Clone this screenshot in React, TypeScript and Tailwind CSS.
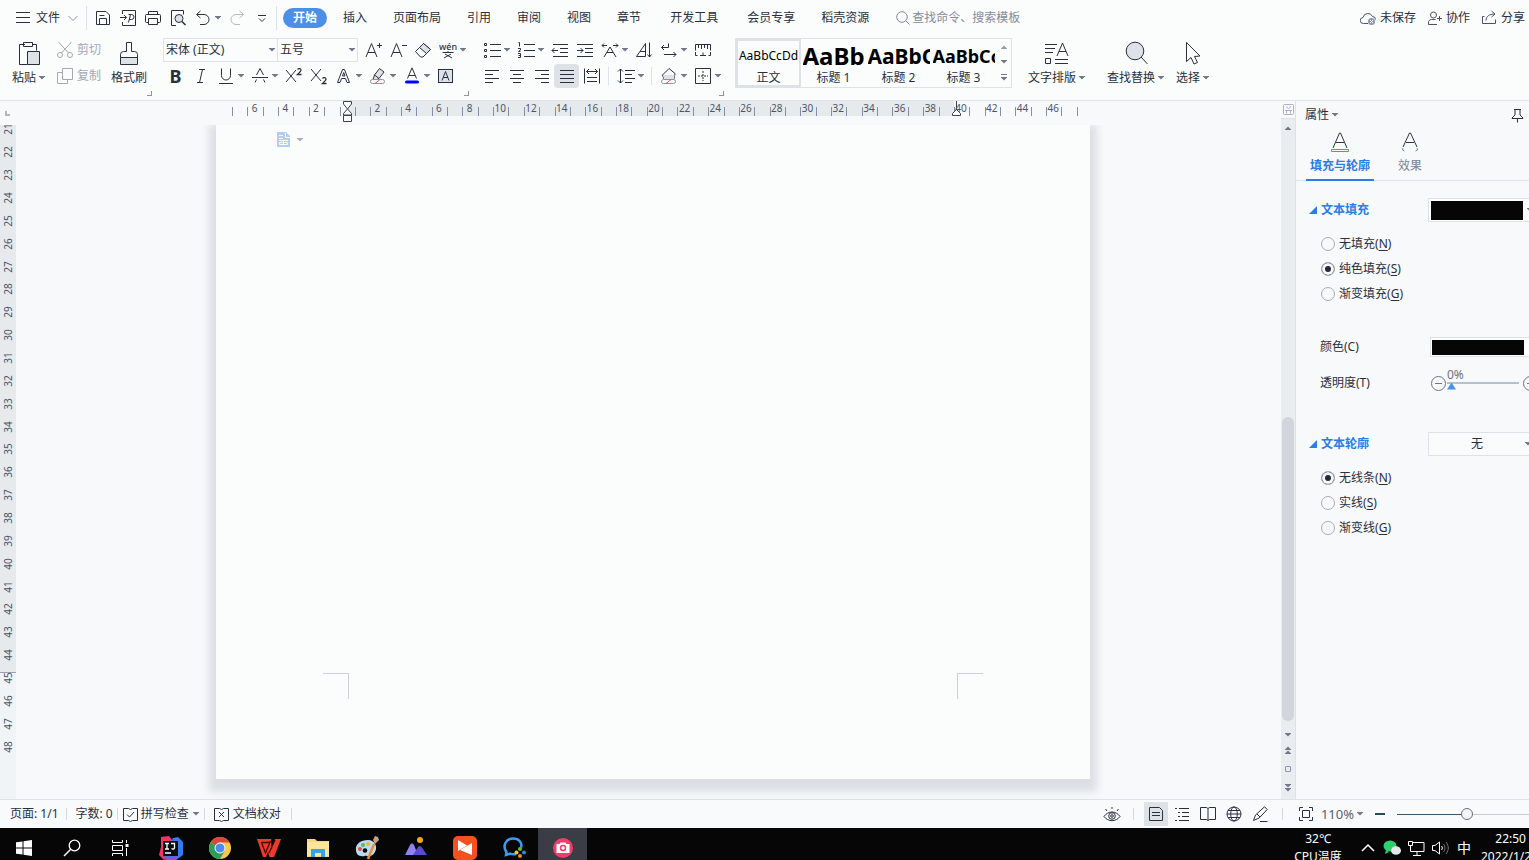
import { useState } from 'react'
import type { ReactNode } from 'react'

interface SvgProps {
  size?: number
  className?: string
  children: ReactNode
}

function Svg({ size = 18, className = '', children }: SvgProps) {
  return (
    <svg
      width={size}
      height={size}
      viewBox={`0 0 ${size} ${size}`}
      fill="none"
      stroke="currentColor"
      className={`shrink-0 ${className}`}
      aria-hidden="true"
    >
      {children}
    </svg>
  )
}

function Caret({ className = '' }: { className?: string }) {
  return (
    <svg width="6" height="4" viewBox="0 0 6 4" className={`shrink-0 fill-[#71788a] ${className}`} aria-hidden="true">
      <path d="M0 0h6v.5L3 3.500 0 .5z" />
    </svg>
  )
}

interface ToolProps {
  label: string
  caret?: boolean
  active?: boolean
  children: ReactNode
}

function Tool({ label, caret, active, children }: ToolProps) {
  return (
    <button aria-label={label} className={`flex h-6 items-center ${caret ? 'w-[34px]' : 'w-[25px]'} ${active ? 'rounded-sm bg-[#dde2e6]' : ''}`}>
      <span className="flex w-[25px] shrink-0 justify-center">{children}</span>
      {caret && <Caret />}
    </button>
  )
}

function ToolDivider() {
  return <span className="mx-1 h-[18px] w-px shrink-0 bg-[#dce2e6]" />
}

function GroupCorner({ label }: { label: string }) {
  return (
    <div className="flex justify-end pt-[2px]">
      <button aria-label={label} className="size-[5px] border-r border-b border-[#8d93a3]" />
    </div>
  )
}

const mainTabs = [['插入', '页面布局', '引用', '审阅', '视图', '章节'], ['开发工具'], ['会员专享', '稻壳资源']]

function TabBar() {
  return (
    <header className="flex h-[34px] shrink-0 items-center pt-px whitespace-nowrap">
      <button className="flex items-center gap-[6px] pl-4">
        <Svg size={14}>
          <path d="M0 1.500h14M0 6.500h14M0 11.500h14" />
        </Svg>
        文件
        <Svg size={10} className="ml-[2px] text-[#8f95a3]">
          <path d="M.5 3l4.500 4.500L9.500 3" />
        </Svg>
      </button>
      <span className="mr-[3px] ml-2 h-6 w-px bg-[#dce2e6]" />
      <Tool label="保存">
        <Svg size={16}>
          <path d="M1.500 1.500h9.500l3.500 3.500v9.500h-13zM4.500 14V8.500h7V14M4.500 5.500h5" />
        </Svg>
      </Tool>
      <Tool label="输出为PDF">
        <Svg size={16}>
          <path d="M2.500 4V.5h13v15h-13V12M0 7.500h6M4 5l2.500 2.500L4 10M8.500 12.500l2-8M8.500 4.500h3a2 2 0 0 1 0 5H9" />
        </Svg>
      </Tool>
      <Tool label="打印">
        <Svg size={16}>
          <path d="M3.500 4.500v-3h9v3M3.500 12.500h-2a1 1 0 0 1-1-1v-6a1 1 0 0 1 1-1h13a1 1 0 0 1 1 1v6a1 1 0 0 1-1 1h-2M3.500 8.500h9v6h-9z" />
        </Svg>
      </Tool>
      <Tool label="打印预览">
        <Svg size={16}>
          <path d="M6 15.500H1.500V.5h12v4" />
          <circle cx="9" cy="8.500" r="4" fill="#dde2e8" />
          <path d="M12 11.500l3.500 3.500" strokeWidth="1.500" />
        </Svg>
      </Tool>
      <Tool label="撤销" caret>
        <Svg size={16}>
          <path d="M5.500 1L1.500 4.500 5.500 8M2 4.500h7a5 5 0 0 1 0 10H5" />
        </Svg>
      </Tool>
      <Tool label="恢复">
        <Svg size={16} className="text-[#b5b9c3]">
          <path d="M10.500 1l4 3.500-4 3.500M14 4.500H7a5 5 0 0 0 0 10h4" />
        </Svg>
      </Tool>
      <Tool label="自定义快速访问">
        <Svg size={10}>
          <path d="M1 2.500h8M2 5.500l3 3 3-3" />
        </Svg>
      </Tool>
      <span className="mx-[6px] ml-[2px] h-6 w-px bg-[#dce2e6]" />
      <nav className="flex gap-[3px]">
        <button className="h-5 rounded-full bg-[#4a90e8] px-[10px] font-bold text-white">开始</button>
        {mainTabs.map((group) => (
          <div key={group[0]} className="flex">
            {group.map((tab) => (
              <button key={tab} className="px-[13px]">
                {tab}
              </button>
            ))}
          </div>
        ))}
      </nav>
      <label className="ml-[14px] flex items-center gap-[2px] text-[#858b9a]">
        <Svg size={14}>
          <circle cx="6" cy="6" r="5.300" />
          <path d="M9.800 9.800l3.700 3.700" />
        </Svg>
        <input
          aria-label="查找命令、搜索模板"
          placeholder="查找命令、搜索模板"
          className="w-32 bg-transparent outline-none placeholder:text-[#858b9a]"
        />
      </label>
      <div className="ml-auto flex gap-3 pr-1">
        <button className="flex items-center gap-1">
          <Svg size={16} className="text-[#4c5365]">
            <path d="M8 13.500H3.500a3 3 0 0 1-.5-6 5 5 0 0 1 9.500-1 3 3 0 0 1 3 3" />
            <circle cx="11.500" cy="11.500" r="3.500" fill="#8f97b8" stroke="none" />
            <path d="M10 10l3 3M13 10l-3 3" stroke="#fff" />
          </Svg>
          未保存
        </button>
        <button className="flex items-center gap-1">
          <Svg size={14} className="text-[#4c5365]">
            <circle cx="5.500" cy="4" r="3" />
            <path d="M9 13.500H.5V12a3 3 0 0 1 3-3.500h4M9 7.500h5M11.500 5v5" />
          </Svg>
          协作
        </button>
        <button className="flex items-center gap-1">
          <Svg size={15} className="text-[#4c5365]">
            <path d="M2.500 6.500H.5v7h13v-4M4 10.500c0-4 3-6.500 9-6.500M9.500 1L13 4l-3.500 3" />
          </Svg>
          分享
        </button>
      </div>
    </header>
  )
}

interface BigToolProps {
  label: string
  caret?: boolean
  children: ReactNode
}

function BigTool({ label, caret, children }: BigToolProps) {
  return (
    <button className="flex flex-col items-center pt-[3px]">
      {children}
      <span className="mt-[3px] flex items-center gap-[3px]">
        {label}
        {caret && <Caret />}
      </span>
    </button>
  )
}

function ClipboardGroup() {
  return (
    <div className="w-[140px]">
      <div className="flex h-[52px]">
        <BigTool label="粘贴" caret>
          <Svg size={26}>
            <path d="M9 4.500H3.500v20h8M17 4.500h3.500v6M7.500 2.500h9v4h-9z" />
            <path d="M11.500 11.500h12v13h-12z" fill="#dde2e8" />
          </Svg>
        </BigTool>
        <div className="ml-3 flex flex-col text-[#a3a8b4]">
          <button className="flex h-[26px] items-center gap-1">
            <Svg size={16}>
              <circle cx="3" cy="13" r="2.500" />
              <circle cx="13" cy="13" r="2.500" />
              <path d="M1.500 0l10 11M14.500 0l-10 11" />
            </Svg>
            剪切
          </button>
          <button className="flex h-[26px] items-center gap-1">
            <Svg size={16}>
              <path d="M5.500.5h10v11h-10zM5.500 4.500h-5v11h10v-4" />
            </Svg>
            复制
          </button>
        </div>
        <div className="ml-[10px] flex">
          <BigTool label="格式刷">
            <Svg size={26}>
              <path d="M10.500 2.500h5v9h3a3 3 0 0 1 3 3v3h-17v-3a3 3 0 0 1 3-3h3z" />
              <path d="M4.500 17.500h17v7h-17z" fill="#dde2e8" />
            </Svg>
          </BigTool>
        </div>
      </div>
      <GroupCorner label="剪贴板" />
    </div>
  )
}

function FontGroup() {
  const [bold, setBold] = useState(false)

  return (
    <div className="ml-[11px] w-[306px]">
      <div className="flex h-[26px] items-center">
        <div className="mr-[2px] flex h-6 border border-[#dce2e6]">
          <span className="relative flex w-[114px] items-center border-r border-[#dce2e6]">
            <select aria-label="字体" className="w-full appearance-none bg-transparent pl-[2px] outline-none">
              <option>宋体 (正文)</option>
            </select>
            <Caret className="pointer-events-none absolute right-[2px]" />
          </span>
          <span className="relative flex w-[79px] items-center">
            <select aria-label="字号" className="w-full appearance-none bg-transparent pl-[2px] outline-none">
              <option>五号</option>
            </select>
            <Caret className="pointer-events-none absolute right-[2px]" />
          </span>
        </div>
        <Tool label="增大字号">
          <Svg>
            <path d="M2 16L7.500 2.500 13 16M4 11.500h7M13 4.500h5M15.500 2v5" />
          </Svg>
        </Tool>
        <Tool label="减小字号">
          <Svg>
            <path d="M2 16L7.500 2.500 13 16M4 11.500h7M13 4.500h5" />
          </Svg>
        </Tool>
        <Tool label="清除格式">
          <Svg>
            <path d="M1.500 10.500l8-8 7 6-7.500 7.500H6.500z" />
            <path d="M5.500 6.500l4-4 7 6-4 4z" fill="#dde2e8" />
          </Svg>
        </Tool>
        <Tool label="拼音指南" caret>
          <Svg>
            <text x="9" y="9" textAnchor="middle" fill="currentColor" stroke="none" className="text-[9px] font-medium">
              wén
            </text>
            <path d="M3.500 11.500h11M9 10v2M6 13l7 4M12 13l-7 4" />
          </Svg>
        </Tool>
      </div>
      <div className="flex h-[26px] items-center">
        <button
          aria-label="加粗"
          aria-pressed={bold}
          onClick={() => setBold(!bold)}
          className="h-6 w-[25px] text-[18px] leading-6 font-bold"
        >
          B
        </button>
        <Tool label="倾斜">
          <Svg>
            <path d="M7 2.500h6M5 15.500h6M10.500 2.500l-3 13" />
          </Svg>
        </Tool>
        <Tool label="下划线" caret>
          <Svg>
            <path d="M4.500 1.500v7a4.500 4.500 0 0 0 9 0v-7M2 16.500h14" />
          </Svg>
        </Tool>
        <Tool label="删除线" caret>
          <Svg>
            <path d="M5.500 8L9 1.500 12.500 8M1 10.500h16M4 15.500l1.500-3M14 15.500l-1.500-3" />
          </Svg>
        </Tool>
        <Tool label="上标">
          <Svg>
            <path d="M1 3l10 12M11 3L1 15" />
            <path d="M12.500 2.500c1-1.500 3.500-1 3.500.7 0 1-1.500 2.300-3.500 4.300h4" strokeWidth="1.300" />
          </Svg>
        </Tool>
        <Tool label="下标">
          <Svg>
            <path d="M1 2l10 12M11 2L1 14" />
            <path d="M12.500 11.500c1-1.500 3.500-1 3.500.7 0 1-1.500 2.300-3.500 4.300h4" strokeWidth="1.300" />
          </Svg>
        </Tool>
        <Tool label="文字效果" caret>
          <Svg>
            <path d="M2.500 15.500L7.500 2.500h2l5 13h-2.500l-1.500-4H6.500l-1.500 4zM7.500 9h2.500l-1.300-3.500z" />
          </Svg>
        </Tool>
        <Tool label="突出显示" caret>
          <Svg>
            <path d="M10.500 1.500l4.500 3.500-5 6.500-4.500-3.500zM5.500 8l-1.500 4.500h4l2-1" fill="#dde2e8" />
            <rect x="1.500" y="12.500" width="14" height="4" rx="2" stroke="#8d93a3" />
            <path d="M6 16.500l5-4" stroke="#d9534f" />
          </Svg>
        </Tool>
        <Tool label="字体颜色" caret>
          <Svg>
            <path d="M4.500 11.500L9 .8l4.500 10.700M6 8.500h6" />
            <path d="M3.500 15h11" stroke="#0000ff" strokeWidth="3" strokeLinecap="round" />
          </Svg>
        </Tool>
        <Tool label="字符底纹">
          <Svg size={16}>
            <rect x=".5" y="1.500" width="14" height="13" fill="#dde2e8" />
            <path d="M4 12.500l3.500-9 3.500 9M5 9.500h5" />
          </Svg>
        </Tool>
      </div>
      <GroupCorner label="字体" />
    </div>
  )
}

function ParagraphGroup() {
  return (
    <div className="ml-[10px] w-[245px]">
      <div className="flex h-[26px] items-center">
        <Tool label="项目符号" caret>
          <Svg>
            <path d="M7 3.500h11M7 9.500h11M7 15.500h11" />
            <path d="M1.500 2.500h2v2h-2zM1.500 8.500h2v2h-2zM1.500 14.500h2v2h-2z" />
          </Svg>
        </Tool>
        <Tool label="编号" caret>
          <Svg>
            <path d="M7 3.500h11M7 9.500h11M7 15.500h11" />
            <path d="M1.500 1.500h1v4M1 7.500h2.500v1.500l-2 1.500h2M1 12.500h2.500v4H1M1.500 14.500h2" />
          </Svg>
        </Tool>
        <Tool label="减少缩进">
          <Svg>
            <path d="M2 3.500h15M9 7.500h8M9 11.500h8M2 15.500h15M1 9.500h6M3.500 7L1 9.500 3.500 12" />
          </Svg>
        </Tool>
        <Tool label="增加缩进">
          <Svg>
            <path d="M1 3.500h16M9 7.500h8M9 11.500h8M1 15.500h16M1 9.500h6M4.500 7L7 9.500 4.500 12" />
          </Svg>
        </Tool>
        <Tool label="中文版式" caret>
          <Svg>
            <path d="M1 4.500h5M3 2.500l-2 2 2 2M12 4.500h5M15 2.500l2 2-2 2M3 16L9 6l6 10M6 11.500h6" />
          </Svg>
        </Tool>
        <Tool label="文字方向">
          <Svg>
            <path d="M1.500 15.500h9v-13zM5 10.500h5M14.500 1.500v14.500M12.500 13.500l2 2.500 2-2.500" />
          </Svg>
        </Tool>
        <Tool label="换行" caret>
          <Svg>
            <path d="M8.500 2.500v4h-7M4 4L1.500 6.500 4 9M4 13.500h12M13.500 11l2.500 2.500-2.500 2.500" />
          </Svg>
        </Tool>
        <Tool label="制表位">
          <Svg>
            <path d="M1.500 9.500v-6h15v6M4.500 4v3M7.500 4v4M10.500 4v3M13.500 4v4M1.500 11v3.500h2M16.500 11v3.500h-2M6 14.500h6M9 11.500v3" />
          </Svg>
        </Tool>
      </div>
      <div className="flex h-[26px] items-center">
        <Tool label="左对齐">
          <Svg>
            <path d="M2 3.500h14M2 7.500h8M2 11.500h14M2 15.500h8" />
          </Svg>
        </Tool>
        <Tool label="居中对齐">
          <Svg>
            <path d="M2 3.500h14M5 7.500h8M2 11.500h14M5 15.500h8" />
          </Svg>
        </Tool>
        <Tool label="右对齐">
          <Svg>
            <path d="M2 3.500h14M8 7.500h8M2 11.500h14M8 15.500h8" />
          </Svg>
        </Tool>
        <Tool label="两端对齐" active>
          <Svg>
            <path d="M2 3.500h14M2 7.500h14M2 11.500h14M2 15.500h14" />
          </Svg>
        </Tool>
        <Tool label="分散对齐">
          <Svg>
            <path d="M1.500 1.500v15M16.500 1.500v15M3.500 4.500h11M6 2L3.500 4.500 6 7M12 2l2.500 2.500L12 7M4 10.500h10M4 14.500h10" />
          </Svg>
        </Tool>
        <ToolDivider />
        <Tool label="行距" caret>
          <Svg>
            <path d="M3.500 2v14M1 4.500L3.500 2 6 4.500M1 13.500L3.500 16 6 13.500M8 3.500h10M8 7.500h7M8 11.500h10M8 15.500h7" />
          </Svg>
        </Tool>
        <ToolDivider />
        <Tool label="底纹颜色" caret>
          <Svg>
            <path d="M2.500 8L9 1.500 15 6.500 14 12H4z" />
            <path d="M3 8h11.500l-.5 4H4z" fill="#dde2e8" stroke="none" />
            <rect x="1.500" y="12.500" width="14" height="4" rx="2" stroke="#8d93a3" />
            <path d="M6 16.500l5-4" stroke="#d9534f" />
          </Svg>
        </Tool>
        <Tool label="边框" caret>
          <Svg>
            <path d="M1.500 1.500h15v15h-15z" />
            <path d="M9 4v10M4 9h10" strokeDasharray="2 1" />
          </Svg>
        </Tool>
      </div>
      <GroupCorner label="段落" />
    </div>
  )
}

function StyleGallery() {
  return (
    <div className="mt-px ml-[11px] flex h-[50px] self-start border border-[#dce2e6]">
      <button className="flex w-[65px] flex-col items-center border-2 border-[#dce2e6]">
        <span className="h-7 w-full text-center text-[12px] leading-[29px] text-black">AaBbCcDd</span>
        <span>正文</span>
      </button>
      <button className="flex w-[65px] flex-col items-center pt-[2px]">
        <span className="h-7 w-[62px] overflow-hidden text-left text-[24px] leading-[30px] font-bold text-black">AaBb</span>
        <span>标题 1</span>
      </button>
      <button className="flex w-[65px] flex-col items-center pt-[2px]">
        <span className="h-7 w-[62px] overflow-hidden text-left text-[21px] leading-[30px] font-bold text-black">AaBbC</span>
        <span>标题 2</span>
      </button>
      <button className="flex w-[65px] flex-col items-center pt-[2px]">
        <span className="h-7 w-[62px] overflow-hidden text-left text-[18px] leading-[30px] font-bold text-black">AaBbCc</span>
        <span>标题 3</span>
      </button>
      <div className="flex w-[15px] flex-col items-center justify-between py-[6px]">
        <button aria-label="上一行">
          <Caret className="rotate-180 opacity-70" />
        </button>
        <button aria-label="下一行">
          <Caret />
        </button>
        <button aria-label="更多样式" className="flex flex-col items-center gap-[2px]">
          <span className="h-px w-[6px] bg-[#71788a]" />
          <Caret />
        </button>
      </div>
    </div>
  )
}

function Ribbon() {
  return (
    <div className="flex h-[66px] shrink-0 pt-[3px] pl-3 whitespace-nowrap">
      <ClipboardGroup />
      <FontGroup />
      <ParagraphGroup />
      <StyleGallery />
      <div className="ml-4 flex gap-[22px]">
        <BigTool label="文字排版" caret>
          <Svg size={26}>
            <path d="M1 4.500h12M1 8.500h10M1 12.500h8M1.500 18.500h5v5h-5zM11 19.500h13M11 23.500h13M13 16L18.500 3 24 16M15 11.500h7" />
          </Svg>
        </BigTool>
        <BigTool label="查找替换" caret>
          <Svg size={26}>
            <circle cx="12" cy="11" r="8.800" fill="#dde2e8" />
            <path d="M18 17l6.500 7" />
          </Svg>
        </BigTool>
        <div className="-ml-[10px] flex">
          <BigTool label="选择" caret>
            <Svg size={26}>
              <path d="M6.500 2.500v19l4.500-4 3 6.500 3.500-1.500-3-6 5.500-.5z" />
            </Svg>
          </BigTool>
        </div>
      </div>
    </div>
  )
}

const horizontalUnits = Array.from({ length: 55 }, (_, i) => i - 7)
const verticalUnits = Array.from({ length: 28 }, (_, i) => i + 21)

function HorizontalRuler() {
  return (
    <div className="flex h-6 shrink-0 pr-[203px] text-[10px] leading-[14px] text-[#4c5568]">
      <div className="flex w-[232px] shrink-0 items-center pl-[5px]">
        <span className="size-[5px] border-b-2 border-l-2 border-[#b3b7c1]" />
      </div>
      <div className="flex h-[15px] min-w-0 flex-1">
        {horizontalUnits.map((unit) => (
          <div key={unit} className={`relative flex min-w-0 flex-1 ${unit > 0 && unit < 40 ? 'bg-[#e6eaed]' : ''}`}>
            <span className="h-[9px] w-px shrink-0 self-end bg-[#8390a8]" />
            <span className="flex flex-1 justify-center pr-[2px]">{unit !== 0 && unit % 2 === 0 ? Math.abs(unit) : ''}</span>
            {unit === 0 && (
              <>
                <span className="w-1/2 bg-[#e6eaed]" />
                <svg width="10" height="22" viewBox="0 0 10 22" fill="#fff" stroke="#3b4254" className="absolute top-0 left-[3px]">
                  <path d="M.5.500h8v2.500L4.500 8 .5 3zM4.500 8l4 4.500v1.500h-8v-1.500zM.5 14.500h8v6h-8z" />
                </svg>
              </>
            )}
            {unit === 40 && (
              <svg width="10" height="15" viewBox="0 0 10 15" fill="#fff" stroke="#3b4254" className="absolute top-0 -left-[2px]">
                <path d="M4.500 0v9M.5 14.500v-2l4-4 4 4v2z" />
              </svg>
            )}
          </div>
        ))}
        <span className="h-[9px] w-px shrink-0 self-end bg-[#8390a8]" />
      </div>
    </div>
  )
}

function VerticalRuler() {
  return (
    <div className="w-4 shrink-0 overflow-hidden bg-[linear-gradient(to_bottom,#e6eaed_547px,#9aa1b3_547px,#9aa1b3_548px,#f1f4f6_548px)] text-[10px] text-[#4c5568]">
      <div className="-mt-[7px] flex h-[640px] flex-col">
        {verticalUnits.map((unit) => (
          <span key={unit} className="flex flex-1 items-center justify-center">
            <span className="-rotate-90">{unit}</span>
          </span>
        ))}
      </div>
    </div>
  )
}

function Document() {
  return (
    <main className="flex min-w-0 flex-1 flex-col">
      <HorizontalRuler />
      <div className="flex min-h-0 flex-1">
        <VerticalRuler />
        <div className="flex min-w-0 flex-1 overflow-hidden pr-[191px] pb-5 pl-[200px]">
          <article className="flex flex-1 flex-col bg-[#fafdfc] shadow-[0_6px_8px_7px_#dbdfe4]">
            <button aria-label="页面选项" className="mt-[7px] ml-[61px] flex items-center gap-[5px] self-start">
              <Svg size={15} className="text-[#fafdfc]">
                <path d="M0 0h9l4 4v11H0z" fill="#b3cff0" stroke="none" />
                <path d="M8.500 1v4.500H13M2 3.500h4M2 6.500h4M2 8.500h9M2.500 10.500h8v2h-8zM6.500 9v4" />
              </Svg>
              <Caret className="opacity-60" />
            </button>
            <div className="mx-[107px] mt-auto mb-20 flex justify-between">
              <span className="size-[26px] border-t border-r border-[#cfd1d9]" />
              <span className="size-[26px] border-t border-l border-[#cfd1d9]" />
            </div>
          </article>
        </div>
      </div>
    </main>
  )
}

function ScrollBar() {
  return (
    <div className="flex w-[15px] shrink-0 flex-col items-center border-r border-[#dce2e6] bg-[#e9edf0]">
      <button aria-label="显示标尺" className="flex h-[18px] w-full items-center justify-center border-b border-[#dce2e6] bg-[#f7f9fa]">
        <Svg size={11} className="text-[#abb0c4]">
          <rect x=".5" y=".5" width="10" height="10" rx="1" />
          <path d="M2 6.500h7M3.500 6.500v3M7.500 6.500v3M3 2.500l2.500 2 2.500-2" />
        </Svg>
      </button>
      <button aria-label="向上滚动" className="flex h-[18px] items-center">
        <Caret className="rotate-180" />
      </button>
      <div className="flex w-full flex-1 flex-col px-px">
        <span className="basis-[280px]" />
        <span className="h-[304px] rounded-full bg-[#d2d6dc]" />
      </div>
      <button aria-label="向下滚动" className="flex h-5 items-end pb-1">
        <Caret />
      </button>
      <button aria-label="上一页" className="flex h-[18px] flex-col items-center justify-center">
        <Caret className="rotate-180" />
        <Caret className="rotate-180" />
      </button>
      <button aria-label="选择浏览对象" className="my-[7px] size-[6px] rounded-[1px] border border-[#8b90b5]" />
      <button aria-label="下一页" className="mb-[2px] flex h-[18px] flex-col items-center justify-center">
        <Caret />
        <Caret />
      </button>
    </div>
  )
}

interface RadioItem {
  text: string
  hotkey: string
}

interface RadioListProps {
  name: string
  items: RadioItem[]
  selected: string
}

function RadioList({ name, items, selected }: RadioListProps) {
  const [value, setValue] = useState(selected)

  return (
    <div className="flex flex-col pl-[25px]">
      {items.map((item) => (
        <label key={item.hotkey} className="flex h-[25px] items-center gap-1">
          <input
            type="radio"
            name={name}
            checked={value === item.hotkey}
            onChange={() => setValue(item.hotkey)}
            className="size-[14px] appearance-none rounded-full border border-[#a6acba] checked:bg-[#252a3d] checked:shadow-[inset_0_0_0_3px_#f7f9fa]"
          />
          <span>
            {item.text}(<span className="underline underline-offset-2">{item.hotkey}</span>)
          </span>
        </label>
      ))}
    </div>
  )
}

function SectionTitle({ children }: { children: ReactNode }) {
  return (
    <h3 className="flex items-center gap-1 font-bold text-[#2b7de6]">
      <svg width="8" height="8" viewBox="0 0 8 8" className="fill-[#2b7de6]" aria-hidden="true">
        <path d="M8 0v8H0z" />
      </svg>
      {children}
    </h3>
  )
}

function PropertyPanel() {
  return (
    <aside className="w-[233px] shrink-0 overflow-hidden whitespace-nowrap">
      <div className="flex h-7 items-center justify-between pr-1 pl-[9px]">
        <button className="flex items-center gap-[3px]">
          属性
          <Caret />
        </button>
        <button aria-label="固定">
          <Svg size={15}>
            <path d="M4 1.500h7M5 1.500v5.500l-3 3v.5h11V10l-3-3V1.500M7.500 10.500v4" />
          </Svg>
        </button>
      </div>
      <div className="flex border-b border-[#dce2e6] pl-[10px]">
        <button className="-mb-px flex w-[68px] flex-col items-center border-b-2 border-[#2b7de6] font-bold text-[#2b7de6]">
          <Svg size={24} className="text-[#2f3446]">
            <path d="M5 19L11.500 4h1L19 19M8 13.500h8" />
            <path d="M3.500 20.500h17v2h-17z" stroke="#4a90e8" />
          </Svg>
          <span className="py-1">填充与轮廓</span>
        </button>
        <button className="flex w-[72px] flex-col items-center text-[#7c8290]">
          <Svg size={24} className="text-[#2f3446]">
            <path d="M5 18L11.500 4h1L19 18M8 13.500h8" />
            <path d="M5 19l-.5 2 2 1M19 19l.5 2-2 1" stroke="#4a90e8" />
          </Svg>
          <span className="py-1">效果</span>
        </button>
      </div>
      <section className="pt-[17px]">
        <div className="mb-[9px] flex h-6 items-center justify-between pl-[13px]">
          <SectionTitle>文本填充</SectionTitle>
          <button aria-label="文本填充颜色" className="flex h-full w-[101px] items-center gap-1 border border-r-0 border-[#dce2e6] bg-white pl-[2px]">
            <span className="h-[19px] w-[92px] shrink-0 bg-[#060606]" />
            <Caret />
          </button>
        </div>
        <RadioList
          name="text-fill"
          selected="S"
          items={[
            { text: '无填充', hotkey: 'N' },
            { text: '纯色填充', hotkey: 'S' },
            { text: '渐变填充', hotkey: 'G' },
          ]}
        />
        <div className="mt-[31px] flex h-5 items-center justify-between pl-6">
          颜色(C)
          <button aria-label="颜色(C)" className="flex h-full w-[99px] items-center border border-r-0 border-[#dce2e6] bg-white pl-px">
            <span className="h-[15px] w-[92px] bg-[#060606]" />
          </button>
        </div>
        <div className="mt-2 flex h-9 items-center pl-6">
          <label htmlFor="opacity" className="w-[111px] shrink-0">
            透明度(T)
          </label>
          <button aria-label="减少" className="shrink-0">
            <Svg size={15} className="text-[#6d7488]">
              <circle cx="7.500" cy="7.500" r="7" />
              <path d="M4 7.500h7" />
            </Svg>
          </button>
          <span className="flex h-full shrink-0 flex-col pt-px pl-px">
            <span className="h-4 leading-[18px] text-[#6d7280]">0%</span>
            <input
              id="opacity"
              type="range"
              defaultValue={0}
              className="h-2 w-[72px] appearance-none bg-[linear-gradient(#b8c0cc,#b8c0cc)] bg-[length:100%_2px] bg-no-repeat [&::-webkit-slider-thumb]:h-[7px] [&::-webkit-slider-thumb]:w-[9px] [&::-webkit-slider-thumb]:appearance-none [&::-webkit-slider-thumb]:bg-[#4a90e8] [&::-webkit-slider-thumb]:[clip-path:polygon(50%_0,100%_100%,0_100%)]"
            />
          </span>
          <button aria-label="增加" className="ml-1 shrink-0">
            <Svg size={15} className="text-[#6d7488]">
              <circle cx="7.500" cy="7.500" r="7" />
              <path d="M4 7.500h7M7.500 4v7" />
            </Svg>
          </button>
        </div>
      </section>
      <section className="pt-[31px]">
        <div className="mb-[9px] flex h-6 items-center justify-between pl-[13px]">
          <SectionTitle>文本轮廓</SectionTitle>
          <span className="flex h-full w-[101px] items-center border border-r-0 border-[#dce2e6] bg-[#fafcfc]">
            <select aria-label="文本轮廓" className="w-[96px] shrink-0 appearance-none outline-none [text-align-last:center]">
              <option>无</option>
            </select>
            <Caret />
          </span>
        </div>
        <RadioList
          name="text-outline"
          selected="N"
          items={[
            { text: '无线条', hotkey: 'N' },
            { text: '实线', hotkey: 'S' },
            { text: '渐变线', hotkey: 'G' },
          ]}
        />
      </section>
    </aside>
  )
}

function StatusDivider() {
  return <span className="h-3 w-px shrink-0 bg-[#d3d9df]" />
}

function StatusBar() {
  return (
    <footer className="flex h-[29px] shrink-0 items-center overflow-hidden border-t border-[#dce2e6] bg-[#f8fafb] whitespace-nowrap">
      <span className="pr-[7px] pl-[10px]">页面: 1/1</span>
      <StatusDivider />
      <span className="pr-1 pl-[9px]">字数: 0</span>
      <StatusDivider />
      <button className="flex items-center gap-[3px] px-[5px]">
        <Svg size={15}>
          <path d="M5.500 1.500h-5v12h5l2 1 2-1h5v-12h-5l-2 1zM4 7.500L6.500 10l4.500-5" />
        </Svg>
        拼写检查
        <Caret className="ml-px" />
      </button>
      <StatusDivider />
      <button className="flex items-center gap-1 pr-[10px] pl-[9px]">
        <Svg size={15}>
          <path d="M5.500 1.500h-5v12h5l2 1 2-1h5v-12h-5l-2 1zM5 5l5 5M10 5l-5 5" />
        </Svg>
        文档校对
      </button>
      <StatusDivider />
      <div className="ml-auto flex items-center">
        <button aria-label="护眼模式" className="px-3">
          <Svg>
            <path d="M1 11.500c4-6 12-6 16 0-4 5.500-12 5.500-16 0zM9 2v2M2.500 4L4 6M15.500 4L14 6" />
            <circle cx="9" cy="11" r="3.300" />
            <circle cx="9" cy="11" r="1.300" />
          </Svg>
        </button>
        <StatusDivider />
        <div className="mx-[10px] flex items-center gap-[2px]">
          <button aria-label="页面视图" className="flex size-6 items-center justify-center bg-[#dde2e6]">
            <Svg size={16}>
              <path d="M1.500 1.500h10l3 3v10h-13zM4 6.500h8M4 9.500h8" />
            </Svg>
          </button>
          <button aria-label="大纲" className="flex size-6 items-center justify-center">
            <Svg size={16}>
              <path d="M1 2.500h2M5 2.500h10M4 6.500h2M8 6.500h7M4 10.500h2M8 10.500h7M1 14.500h2M5 14.500h10" />
            </Svg>
          </button>
          <button aria-label="阅读版式" className="flex size-6 items-center justify-center">
            <Svg size={16}>
              <path d="M.5 1.500h6l1.500 1 1.500-1h6v12h-6L8 14.500l-1.500-1h-6zM8 2.500v12" />
            </Svg>
          </button>
          <button aria-label="Web版式" className="flex size-6 items-center justify-center">
            <Svg size={16}>
              <circle cx="8" cy="8" r="7" />
              <ellipse cx="8" cy="8" rx="3.300" ry="7" />
              <path d="M2 4.500h12M1 8h14M2 11.500h12" />
            </Svg>
          </button>
          <button aria-label="写作模式" className="flex size-6 items-center justify-center">
            <Svg size={16}>
              <path d="M12.500.8l2.700 2.700-8 8.500-5.700 2.500 2-5.500zM5 8l3 3M8 15.500h7.500" />
            </Svg>
          </button>
        </div>
        <StatusDivider />
        <button aria-label="最佳显示比例" className="ml-4">
          <Svg size={14}>
            <path d="M.5 4V.5H4M10 .5h3.500V4M.5 10v3.500H4M10 13.500h3.500V10M3.500 3.500h7v7h-7z" />
          </Svg>
        </button>
        <button className="ml-2 flex items-center gap-[3px] text-[13px] text-[#5a6172]">
          110%
          <Caret />
        </button>
        <button aria-label="缩小" className="ml-3 h-[2px] w-[10px] bg-[#2d4a5c]" />
        <input
          aria-label="显示比例"
          type="range"
          defaultValue={50}
          className="-mr-2 ml-3 h-3 w-[140px] appearance-none bg-[linear-gradient(to_right,#37566b_50%,#c3cbd8_50%)] bg-[length:100%_1px] bg-center bg-no-repeat [&::-webkit-slider-thumb]:size-3 [&::-webkit-slider-thumb]:appearance-none [&::-webkit-slider-thumb]:rounded-full [&::-webkit-slider-thumb]:border [&::-webkit-slider-thumb]:border-[#6d6f80] [&::-webkit-slider-thumb]:bg-[#f5f5f8]"
        />
      </div>
    </footer>
  )
}

interface TaskApp {
  name: string
  icon: ReactNode
}

const taskApps: TaskApp[] = [
  {
    name: 'IntelliJ IDEA',
    icon: (
      <>
        <path d="M2 1l8-1 3 4-2 17-6 3-5-5 2-8z" fill="#f0356b" />
        <path d="M14 2l5-1 5 5v13l-7 5-9-1-3-3z" fill="#2f7df0" />
        <path d="M9 21l10-1-3 4H6z" fill="#8a4fd8" />
        <path d="M4 5h15v15H4z" fill="#0b0b10" />
        <path d="M6 7.500h4M8 7.500v5.500M6 13h4M12 7.500h3.500v4.500c0 1-2 1.500-3 .5M6 17h6" stroke="#fff" strokeWidth="1.300" />
      </>
    ),
  },
  {
    name: 'Chrome',
    icon: (
      <>
        <circle cx="12" cy="12" r="11" fill="#f7c948" />
        <path d="M12 12L2.500 6.500A11 11 0 0 1 21.500 6.500H12z" fill="#d9483b" />
        <path d="M12 12L2.500 6.500A11 11 0 0 0 12 23l4.500-8z" fill="#2f9e55" />
        <circle cx="12" cy="12" r="5" fill="#4a8cf0" stroke="#fff" />
      </>
    ),
  },
  {
    name: 'WPS Office',
    icon: (
      <>
        <path d="M0 3h24l-7 18h-4.500L11 16l-2 5H6z" fill="#f23a28" />
        <path d="M4 6.500h9M4.500 6.500L8.500 17l5-12M18 4l-6 13" stroke="#3a0b08" strokeWidth="1.300" />
        <path d="M14 3h4l-3.500 8z" fill="#060606" />
      </>
    ),
  },
  {
    name: '文件资源管理器',
    icon: (
      <>
        <path d="M1 3h8l2 2h12v16H1z" fill="#f5d77e" />
        <path d="M1 6h22v14H1z" fill="#fbe49b" />
        <path d="M5 13h14v8h-4v-4H9v4H5z" fill="#35a3e8" />
      </>
    ),
  },
  {
    name: '画图',
    icon: (
      <>
        <path d="M1 14C0 8 6 4 13 4c7 0 10 7 7 12-2 4-6 5-8 4s-3 1-6 0c-3 0-5-3-5-6z" fill="#b9dcf2" />
        <circle cx="5" cy="13" r="2" fill="#e0503c" />
        <circle cx="8" cy="9" r="2" fill="#5cb85c" />
        <circle cx="13" cy="8" r="2" fill="#f0b429" />
        <circle cx="10" cy="14.500" r="2.300" fill="#0b0b10" />
        <path d="M19 8l-6 15" stroke="#e8913a" strokeWidth="2.500" />
        <path d="M18 4l2-4 3 1 1 3-4 4z" fill="#c9a27a" />
      </>
    ),
  },
  {
    name: '图片查看',
    icon: (
      <>
        <path d="M1 19L6 9c1-2 3-2 4 0l4 10z" fill="#8f83ee" />
        <path d="M9 19l5-8c1-1.500 2.500-1.500 3.500 0L23 19z" fill="#5b48d6" />
        <circle cx="16" cy="4" r="3" fill="#f9a712" />
      </>
    ),
  },
  {
    name: '录屏',
    icon: (
      <>
        <rect width="24" height="24" rx="5" fill="#f4511e" />
        <path d="M5 4l9 5.500L5 15z" fill="#fff" />
        <path d="M19 7v12L7 14z" fill="#fff" />
      </>
    ),
  },
  {
    name: '企业微信',
    icon: (
      <>
        <path d="M14 18c-2 .5-4 .5-6-.3l-4 1.300.5-3C0 10 4 2.500 11 2.500c6 0 9.500 4.500 8 9" stroke="#3a9df0" strokeWidth="2.500" />
        <circle cx="18" cy="13" r="2" fill="#5cc42c" />
        <circle cx="22" cy="16.500" r="2" fill="#2f87e8" />
        <circle cx="18" cy="20" r="2" fill="#f08a24" />
        <circle cx="14.500" cy="16.500" r="2" fill="#f4c430" />
      </>
    ),
  },
  {
    name: '截图',
    icon: (
      <>
        <circle cx="12" cy="12" r="10" fill="#f53b68" />
        <path d="M5.500 8h3l1-1.500h5L15.500 8h3v9h-13z" fill="#fff" />
        <circle cx="12" cy="12" r="2.500" stroke="#f53b68" strokeWidth="1.500" />
      </>
    ),
  },
]

function TaskBar() {
  return (
    <div className="h-8 shrink-0 overflow-hidden bg-[#060606] text-white">
      <div className="flex h-10 items-stretch whitespace-nowrap">
        <button aria-label="开始菜单" className="flex w-12 items-center justify-center">
          <Svg size={16}>
            <path d="M0 2.300l6.500-.9v6.100H0zM7.500 1.200L16 0v7.500H7.500zM0 8.500h6.500v6.100L0 13.700zM7.500 8.500H16V16l-8.500-1.200z" fill="#fff" stroke="none" />
          </Svg>
        </button>
        <button aria-label="搜索" className="flex w-12 items-center justify-center">
          <Svg>
            <circle cx="11.500" cy="6.500" r="5.300" strokeWidth="1.300" />
            <path d="M7.500 10.500L1 17" strokeWidth="1.500" />
          </Svg>
        </button>
        <button aria-label="任务视图" className="mr-[2px] flex w-12 items-center justify-center">
          <Svg>
            <path d="M1.500 1v2.500h10V1M1.500 6.500h10v5h-10zM1.500 17v-2.500h10V17M15.500 1v3M15.500 9v8" />
            <path d="M14.500 5h3v3h-3z" fill="#fff" stroke="none" />
          </Svg>
        </button>
        {taskApps.map((app) => (
          <button
            key={app.name}
            aria-label={app.name}
            className={`flex w-[49px] items-center justify-center ${app.name === '截图' ? 'bg-[#3a3d45]' : ''}`}
          >
            <Svg size={24}>
              <g stroke="none">{app.icon}</g>
            </Svg>
          </button>
        ))}
        <div className="ml-auto flex w-12 flex-col items-center pt-[2px] leading-[18px]">
          <span>32℃</span>
          <span>CPU温度</span>
        </div>
        <div className="ml-[17px] flex items-center gap-[6px]">
          <Svg className="stroke-[1.5]">
            <path d="M3 12l6-6 6 6" />
          </Svg>
          <Svg>
            <ellipse cx="7" cy="7" rx="6.500" ry="5.500" fill="#2fcf6b" stroke="none" />
            <path d="M3 11l-1 4 4-2z" fill="#2fcf6b" stroke="none" />
            <ellipse cx="13" cy="11.500" rx="5" ry="4.300" fill="#e8e8e8" stroke="none" />
          </Svg>
          <Svg>
            <path d="M5 3.500h12v9H3.500V7M1.500 2.500h4v4h-4zM6 16.500h8M10 12.500v4" />
          </Svg>
          <Svg>
            <path d="M1.500 6.500H4L8.500 3v12L4 11.500H1.500zM10.500 7c1 1 1 3 0 4" />
            <path d="M12.500 5c2 2.500 2 5.500 0 8M15 3c3 4 3 8 0 12" stroke="#777" />
          </Svg>
          <span className="flex w-[18px] justify-center text-[14px]">中</span>
        </div>
        <div className="ml-2 flex w-12 flex-col pt-[2px] leading-[18px]">
          <span className="pr-[3px] text-right">22:50</span>
          <span>2022/1/2</span>
        </div>
      </div>
    </div>
  )
}

export default function App() {
  return (
    <div className="flex h-screen flex-col overflow-hidden bg-[#fafdfc] font-['Noto_Sans','Noto_Sans_CJK_SC',sans-serif] text-[12px] leading-[18px] text-[#2a2f40]">
      <TabBar />
      <Ribbon />
      <div className="flex min-h-0 flex-1 border-t border-[#dce2e6] bg-[#f7f9fa]">
        <Document />
        <ScrollBar />
        <PropertyPanel />
      </div>
      <StatusBar />
      <TaskBar />
    </div>
  )
}
